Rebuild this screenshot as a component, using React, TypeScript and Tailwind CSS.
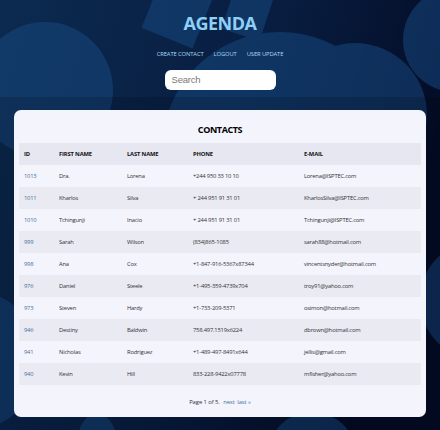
import React from "react";

const rows = [
  ["1013", "Dra.", "Lorena", "+244 950 33 10 10", "Lorena@ISPTEC.com"],
  ["1011", "Kharlos", "Silva", "+ 244 951 91 31 01", "KharlosSilva@ISPTEC.com"],
  ["1010", "Tchingunji", "Inacio", "+ 244 951 91 31 01", "Tchingunji@ISPTEC.com"],
  ["999", "Sarah", "Wilson", "(834)865-1085", "sarah88@hotmail.com"],
  ["998", "Ana", "Cox", "+1-847-916-5367x87344", "vincentsnyder@hotmail.com"],
  ["976", "Daniel", "Steele", "+1-495-359-4739x704", "troy91@yahoo.com"],
  ["973", "Steven", "Hardy", "+1-733-209-5371", "osimon@hotmail.com"],
  ["946", "Destiny", "Baldwin", "758.497.1519x6224", "dbrown@hotmail.com"],
  ["941", "Nicholas", "Rodriguez", "+1-489-497-8491x644", "jellis@gmail.com"],
  ["940", "Kevin", "Hill", "833-228-9422x07778", "mfisher@yahoo.com"],
];

function Background() {
  return (
    <svg className="absolute inset-0" width="440" height="430" viewBox="0 0 440 430">
      <defs>
        <linearGradient id="bg" x1="0" y1="0" x2="1" y2="0.3">
          <stop offset="0" stopColor="#0c2a50" />
          <stop offset="0.6" stopColor="#081d40" />
          <stop offset="1" stopColor="#040c26" />
        </linearGradient>
      </defs>
      <rect width="440" height="430" fill="url(#bg)" />
      <g fill="#16487f" opacity="0.55">
        <circle cx="45" cy="90" r="68" />
        <circle cx="-30" cy="360" r="70" />
        <circle cx="195" cy="175" r="66" />
        <circle cx="280" cy="150" r="118" />
        <circle cx="355" cy="115" r="72" />
        <circle cx="455" cy="40" r="52" />
        <circle cx="480" cy="300" r="60" />
        <ellipse cx="97" cy="445" rx="20" ry="32" />
        <ellipse cx="312" cy="450" rx="42" ry="38" />
        <rect x="150" y="-15" width="55" height="55" transform="rotate(22 177 12)" />
        <rect x="228" y="-12" width="40" height="48" transform="rotate(18 248 12)" />
      </g>
    </svg>
  );
}

export default function App() {
  return (
    <div
      className="relative w-[440px] h-[430px] overflow-hidden"
      style={{ fontFamily: "'Open Sans', 'Noto Sans', sans-serif" }}
    >
      <Background />
      <div className="relative flex flex-col h-full">
        <div className="h-[97px] flex flex-col items-center">
          <h1 className="mt-[12px] text-[18px] leading-[22px] font-bold text-[#8fd0f7] tracking-[-0.5px]">
            AGENDA
          </h1>
          <nav className="mt-[16px] flex gap-[10px] text-[5.8px] leading-[8px] text-[#a9d9f6] tracking-[-0.1px]">
            <span>CREATE CONTACT</span>
            <span>LOGOUT</span>
            <span>USER UPDATE</span>
          </nav>
          <div className="mt-[12px] w-[111px] h-[20px] bg-white rounded-[6px] flex items-center pl-[7px]">
            <span
              className="text-[9.5px] text-[#7a7a7a] tracking-[-0.2px]"
              style={{ fontFamily: "'Liberation Sans', Arial, sans-serif" }}
            >
              Search
            </span>
          </div>
        </div>
        <div className="flex-1 bg-black/15 pt-[13px] px-[14px]">
          <div className="bg-[#f4f4fd] rounded-[7px] h-[307px] px-[5px] flex flex-col">
            <h2 className="text-center text-[9px] font-bold text-black mt-[14px] leading-[12px] tracking-[-0.4px]">
              CONTACTS
            </h2>
            <div className="mt-[7px] grid grid-cols-[35px_68px_66px_111px_1fr] h-[22px] items-center bg-[#e7e7f2] text-[5.8px] font-bold text-[#111] tracking-[-0.15px]">
              <span className="pl-[5px]">ID</span>
              <span className="pl-[5px]">FIRST NAME</span>
              <span className="pl-[5px]">LAST NAME</span>
              <span className="pl-[5px]">PHONE</span>
              <span className="pl-[5px]">E-MAIL</span>
            </div>
            {rows.map((r, i) => (
              <div
                key={r[0]}
                className={
                  "grid grid-cols-[35px_68px_66px_111px_1fr] h-[22px] items-center text-[5.8px] text-[#333] tracking-[-0.2px] " +
                  (i % 2 === 1 ? "bg-[#eaeaf3]" : "")
                }
              >
                <span className="pl-[5px] text-[#3f6f9a]">{r[0]}</span>
                <span className="pl-[5px]">{r[1]}</span>
                <span className="pl-[5px]">{r[2]}</span>
                <span className="pl-[5px]">{r[3]}</span>
                <span className="pl-[5px]">{r[4]}</span>
              </div>
            ))}
            <div className="mt-[13px] text-center text-[5.9px] text-[#333] tracking-[-0.1px]">
              Page 1 of 5. <span className="text-[#3f6f9a] ml-[2px]">next</span>{" "}
              <span className="text-[#3f6f9a] ml-[1px]">last »</span>
            </div>
          </div>
        </div>
      </div>
    </div>
  );
}
